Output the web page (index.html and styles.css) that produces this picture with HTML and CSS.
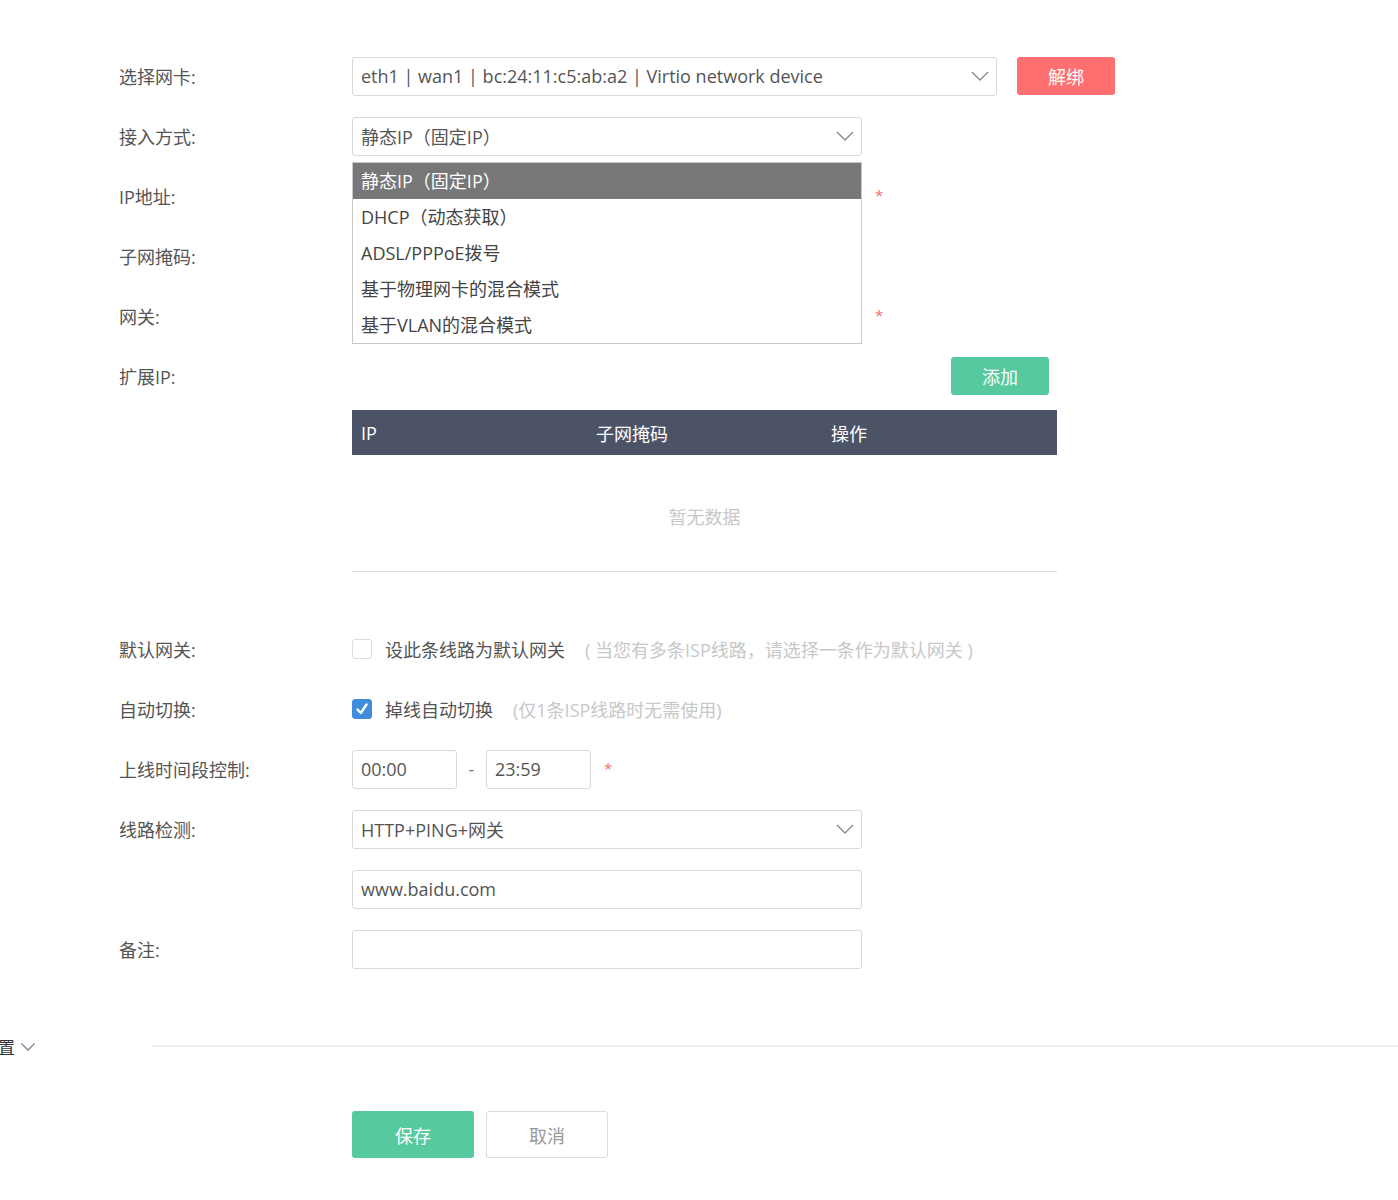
FILE: index.html
```html
<!DOCTYPE html>
<html lang="zh-CN">
<head>
<meta charset="utf-8">
<title>网卡配置</title>
<link rel="stylesheet" href="styles.css">
</head>
<body>
<div class="page">
  <form class="form">
    <div class="row">
      <label class="label">选择网卡:</label>
      <div class="select wide">
        <span class="select-text">eth1 | wan1 | bc:24:11:c5:ab:a2 | Virtio network device</span>
        <svg class="chev" width="18" height="10" viewBox="0 0 18 10"><path d="M1 1 L9 9 L17 1" fill="none" stroke="#8a8a8a" stroke-width="1.4"/></svg>
      </div>
      <button type="button" class="btn btn-red">解绑</button>
    </div>
    <div class="row">
      <label class="label">接入方式:</label>
      <div class="select-wrap">
        <div class="select">
          <span class="select-text">静态IP（固定IP）</span>
          <svg class="chev" width="18" height="10" viewBox="0 0 18 10"><path d="M1 1 L9 9 L17 1" fill="none" stroke="#8a8a8a" stroke-width="1.4"/></svg>
        </div>
        <ul class="dropdown">
          <li class="opt active">静态IP（固定IP）</li>
          <li class="opt">DHCP（动态获取）</li>
          <li class="opt">ADSL/PPPoE拨号</li>
          <li class="opt">基于物理网卡的混合模式</li>
          <li class="opt">基于VLAN的混合模式</li>
        </ul>
      </div>
    </div>
    <div class="row">
      <label class="label">IP地址:</label>
      <div class="input"></div>
      <span class="req">*</span>
    </div>
    <div class="row">
      <label class="label">子网掩码:</label>
      <div class="input"></div>
    </div>
    <div class="row">
      <label class="label">网关:</label>
      <div class="input"></div>
      <span class="req">*</span>
    </div>
    <div class="row">
      <label class="label">扩展IP:</label>
      <div class="ext-bar">
        <button type="button" class="btn btn-green btn-add">添加</button>
      </div>
    </div>
    <div class="table-row">
      <div class="table">
        <div class="thead">
          <div class="th">IP</div>
          <div class="th">子网掩码</div>
          <div class="th">操作</div>
        </div>
        <div class="tbody">暂无数据</div>
      </div>
    </div>
    <div class="row row-first">
      <label class="label">默认网关:</label>
      <span class="checkbox"></span>
      <span class="check-text">设此条线路为默认网关</span>
      <span class="hint">( 当您有多条ISP线路，请选择一条作为默认网关 )</span>
    </div>
    <div class="row">
      <label class="label">自动切换:</label>
      <span class="checkbox checked"><svg width="14" height="14" viewBox="0 0 14 14"><path d="M2.5 7.5 L5.8 11 L11.5 2.5" fill="none" stroke="#fff" stroke-width="2.4" stroke-linecap="round" stroke-linejoin="round"/></svg></span>
      <span class="check-text">掉线自动切换</span>
      <span class="hint">(仅1条ISP线路时无需使用)</span>
    </div>
    <div class="row">
      <label class="label">上线时间段控制:</label>
      <div class="input small">00:00</div>
      <span class="dash">-</span>
      <div class="input small">23:59</div>
      <span class="req req-time">*</span>
    </div>
    <div class="row">
      <label class="label">线路检测:</label>
      <div class="select">
        <span class="select-text">HTTP+PING+网关</span>
        <svg class="chev" width="18" height="10" viewBox="0 0 18 10"><path d="M1 1 L9 9 L17 1" fill="none" stroke="#8a8a8a" stroke-width="1.4"/></svg>
      </div>
    </div>
    <div class="row">
      <label class="label"></label>
      <div class="input">www.baidu.com</div>
    </div>
    <div class="row">
      <label class="label">备注:</label>
      <div class="input"></div>
    </div>
  </form>
  <div class="advanced">
    <div class="adv-toggle">
      <span class="adv-text">高级设置</span>
      <svg width="16" height="10" viewBox="0 0 16 10"><path d="M1.5 1.5 L8 8 L14.5 1.5" fill="none" stroke="#8a94a6" stroke-width="1.6"/></svg>
    </div>
    <div class="adv-line"></div>
  </div>
  <div class="actions">
    <button type="button" class="btn btn-green btn-big">保存</button>
    <button type="button" class="btn btn-plain btn-big">取消</button>
  </div>
</div>
</body>
</html>
```
FILE: styles.css
```css
* { box-sizing: border-box; }
html, body { margin: 0; padding: 0; background: #fff; }
body {
  font-family: "Open Sans", "Noto Sans CJK SC", sans-serif;
  font-size: 18px;
  color: #555;
}
.page { width: 1398px; min-height: 1200px; overflow: hidden; }
.form { padding: 46px 0 0 119px; margin: 0; }
.row {
  display: flex;
  align-items: center;
  height: 60px;
}
.label {
  width: 233px;
  flex: none;
  color: #555;
  white-space: nowrap;
}
.select, .input {
  position: relative;
  width: 510px;
  height: 39px;
  border: 1px solid #d9d9d9;
  border-radius: 3px;
  display: flex;
  align-items: center;
  padding: 0 8px;
  color: #555;
  background: #fff;
  white-space: nowrap;
}
.select.wide { width: 645px; }
.select-text { flex: 1; }
.chev { flex: none; margin-right: -1px; }
.select-wrap { position: relative; }
.dropdown {
  position: absolute;
  left: 0;
  top: 45px;
  width: 510px;
  margin: 0;
  padding: 0;
  list-style: none;
  border: 1px solid #c8c8c8;
  background: #fff;
  z-index: 5;
}
.opt {
  height: 36px;
  line-height: 36px;
  padding-left: 8px;
  color: #444;
}
.opt.active { background: #777; color: #fff; }
.req {
  color: #f46e6e;
  font-size: 15px;
  margin-left: 13px;
  margin-top: -2px;
}
.req-time { margin-left: 13px; }
.btn {
  font-family: inherit;
  font-size: 18px;
  border: none;
  border-radius: 3px;
  cursor: pointer;
}
.btn-red {
  width: 98px;
  height: 38px;
  margin-left: 20px;
  background: #ff6f6f;
  color: #fff;
}
.btn-green { background: #57c99e; color: #fff; }
.ext-bar {
  width: 697px;
  display: flex;
  justify-content: flex-end;
}
.btn-add { width: 98px; height: 38px; }
.table-row { padding-left: 233px; margin-top: 4px; }
.table { width: 705px; }
.thead {
  display: flex;
  height: 45px;
  align-items: center;
  background: #4d5366;
  color: #fff;
}
.th { width: 235px; padding-left: 9px; }
.tbody {
  height: 117px;
  border-bottom: 1px solid #dcdcdc;
  display: flex;
  align-items: center;
  justify-content: center;
  color: #c8c8c8;
  padding-top: 6px;
}
.row-first { margin-top: 47px; }
.checkbox {
  width: 20px;
  height: 20px;
  border: 1px solid #dcdcdc;
  border-radius: 3px;
  flex: none;
  display: flex;
  align-items: center;
  justify-content: center;
}
.checkbox.checked { background: #3f8ddb; border-color: #3f8ddb; }
.check-text { margin-left: 13px; color: #555; }
.hint { margin-left: 20px; color: #c8c8c8; }
.input.small { width: 105px; }
.dash { width: 29px; text-align: center; color: #777; }
.advanced {
  display: flex;
  align-items: center;
  margin-top: 57px;
  height: 20px;
}
.adv-toggle {
  width: 152px;
  flex: none;
  display: flex;
  align-items: center;
  color: #333;
  font-size: 17px;
}
.adv-text { margin-left: -53px; white-space: nowrap; }
.adv-toggle svg { margin-left: 5px; margin-top: 1px; }
.adv-line { flex: 1; height: 2px; background: #efefef; }
.actions {
  display: flex;
  gap: 12px;
  padding-left: 352px;
  margin-top: 55px;
}
.btn-big { width: 122px; height: 47px; }
.btn-plain { background: #fff; border: 1px solid #dcdcdc; color: #999; }
```
